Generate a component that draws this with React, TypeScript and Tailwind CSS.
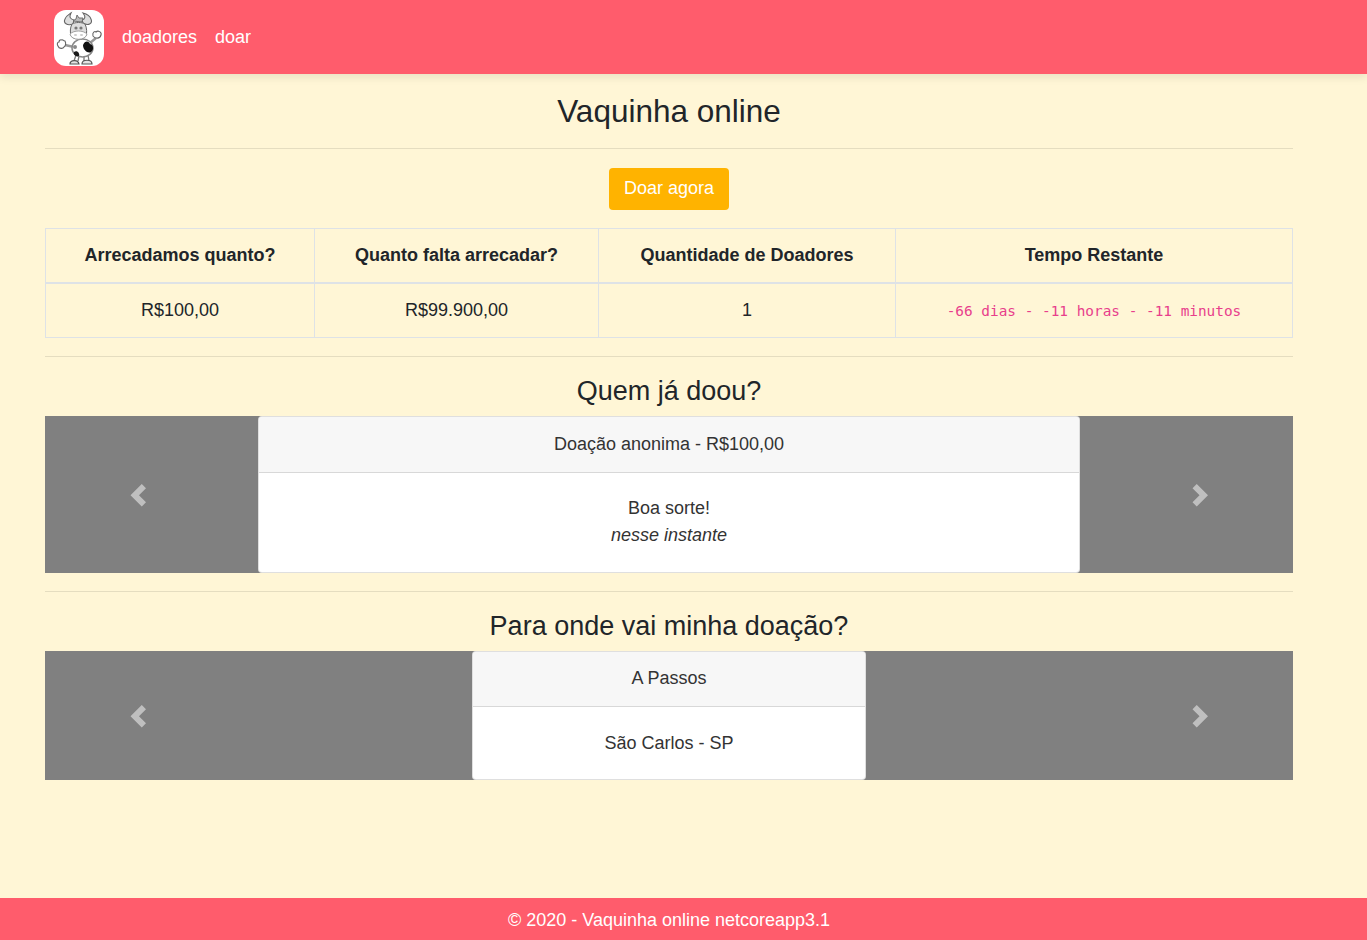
const CowLogo = () => (
  <svg viewBox="0 0 50 56" className="mt-[2px] h-14 w-[50px] rounded-xl bg-white">
    {/* horns */}
    <path d="M19 14 C13 16 9 13 11 9 C12 6 14 5 17 3 C15 7 16 9 20 10 Z" fill="#ddd" stroke="#666" strokeWidth="1.1" />
    <path d="M29 13 C34 16 39 14 37 9 C36 6 33 4 29 3 C32 7 31 9 28 10 Z" fill="#ddd" stroke="#666" strokeWidth="1.1" />
    {/* tuft */}
    <path d="M19 11 L22 9 L23 5 L25 8 L29 8 L28 12 Z" fill="#bbb" stroke="#666" strokeWidth="0.9" />
    {/* legs and feet */}
    <path d="M22 45 L20 51 M25 46 L24 51 M30 46 L30 51 M34 45 L35 51" stroke="#777" strokeWidth="1.3" fill="none" />
    <path d="M16 54 C16 50 24 49 25 54 Z" fill="#e4e4e4" stroke="#555" strokeWidth="1.2" />
    <path d="M28 54 C28 49 38 49 38 54 Z" fill="#e4e4e4" stroke="#555" strokeWidth="1.2" />
    {/* arms */}
    <path d="M36 33 L42 28 M20 37 L11 35" stroke="#999" strokeWidth="2.4" fill="none" />
    <path d="M39 26 C38 22 41 21 42 22 C44 20 48 22 47 25 C46 29 41 29 39 26 Z" fill="#fff" stroke="#666" strokeWidth="1.1" />
    <path d="M11 31 C9 31 9 29 8 30 C6 29 5 31 5 32 C3 32 3 35 4 36 C5 39 9 39 10 37 C12 36 12 33 11 31 Z" fill="#fff" stroke="#666" strokeWidth="1.1" />
    {/* body */}
    <ellipse cx="28.5" cy="38" rx="10.5" ry="9" fill="#fff" stroke="#888" strokeWidth="1.5" />
    <path d="M29 35 C31 30 35 31 36 34 C40 35 40 40 37 42 C34 44 29 40 29 35 Z" fill="#111" />
    <path d="M20 42 C23 40 26 43 25 46 C22 47 19 45 20 42 Z" fill="#1a1a1a" />
    <circle cx="21" cy="37" r="2" fill="#888" />
    {/* head */}
    <path d="M18 14 C21 12 28 12 31 14 C33 18 33 23 32 26 C29 30 20 30 17 26 C16 22 16 18 18 14 Z" fill="#ddd" stroke="#666" strokeWidth="1" />
    <path d="M16 24 C20 20 29 20 33 24 C32 31 17 31 16 24 Z" fill="#fff" stroke="#999" strokeWidth="0.9" />
    <circle cx="22" cy="18" r="1.6" fill="#777" />
    <circle cx="27" cy="18" r="1.6" fill="#777" />
    <ellipse cx="21.5" cy="25" rx="1.6" ry="1.1" fill="#ccc" />
    <ellipse cx="27.5" cy="25" rx="1.6" ry="1.1" fill="#ccc" />
  </svg>
);

const Arrow = ({ right }: { right?: boolean }) => (
  <svg viewBox="0 0 8 8" className={`mt-[2px] h-[22.5px] w-[22.5px] fill-white opacity-50 ${right ? "ml-[2px]" : ""}`}>
    <path d={right ? "M2.75 0l-1.5 1.5L3.75 4l-2.5 2.5L2.75 8l4-4-4-4z" : "M5.25 0l-4 4 4 4 1.5-1.5L4.25 4l2.5-2.5L5.25 0z"} />
  </svg>
);

const Carousel = ({ title, widthClass, children }: { title: string; widthClass: string; children: React.ReactNode }) => (
  <div className="relative flex justify-center bg-[#808080]">
    <div className={`rounded border border-black/[.125] bg-white text-center text-[#333] ${widthClass}`}>
      <div className="rounded-t border-b border-black/[.125] bg-[#f7f7f7] py-[13.75px] leading-[27px]">{title}</div>
      <div className="py-[22.5px] leading-[27px]">{children}</div>
    </div>
    <div className="absolute inset-y-0 left-0 flex w-[15%] items-center justify-center">
      <Arrow />
    </div>
    <div className="absolute inset-y-0 right-0 flex w-[15%] items-center justify-center">
      <Arrow right />
    </div>
  </div>
);

const headers = ["Arrecadamos quanto?", "Quanto falta arrecadar?", "Quantidade de Doadores", "Tempo Restante"];

export default function App() {
  return (
    <div className="flex min-h-[940px] flex-col bg-[#fff6d6] font-['Liberation_Sans',Arial,sans-serif] text-[18px] text-[#212529]">
      {/* Navbar */}
      <nav className="flex h-[74px] items-center gap-[18px] bg-[#ff5c6c] pl-[54px] text-white shadow-[0_4px_8px_rgba(0,0,0,0.08)]">
        <CowLogo />
        <a>doadores</a>
        <a>doar</a>
      </nav>

      {/* Content */}
      <main className="ml-[45px] w-[1248px] flex-1 text-center">
        <h1 className="pt-[18px] text-[31.5px] leading-[38px]">Vaquinha online</h1>
        <hr className="mt-[18px] border-black/10" />
        <button className="mx-auto mt-[19px] block h-[42px] w-[120px] rounded bg-[#ffb300] pb-[2px] text-white">Doar agora</button>

        <table className="mt-[18px] w-full table-fixed border-collapse">
          <thead>
            <tr className="h-[54px]">
              {headers.map((h, i) => (
                <th
                  key={h}
                  className={`border border-b-2 border-[#dee2e6] font-bold ${["w-[269px]", "w-[284px]", "w-[297px]", ""][i]}`}
                >
                  {h}
                </th>
              ))}
            </tr>
          </thead>
          <tbody>
            <tr className="h-[55px]">
              <td className="border border-[#dee2e6]">R$100,00</td>
              <td className="border border-[#dee2e6]">R$99.900,00</td>
              <td className="border border-[#dee2e6]">1</td>
              <td className="border border-[#dee2e6]">
                <code className="font-['DejaVu_Sans_Mono',monospace] text-[14.4px] text-[#e83e8c]">
                  -66 dias - -11 horas - -11 minutos
                </code>
              </td>
            </tr>
          </tbody>
        </table>

        <hr className="mt-[18px] border-black/10" />
        <h3 className="pt-[18px] pb-[9px] text-[27px] leading-[32px]">Quem já doou?</h3>
        <Carousel title="Doação anonima - R$100,00" widthClass="w-[822px]">
          <p>Boa sorte!</p>
          <p className="italic">nesse instante</p>
        </Carousel>

        <hr className="mt-[18px] border-black/10" />
        <h3 className="pt-[18px] pb-[9px] text-[27px] leading-[32px]">Para onde vai minha doação?</h3>
        <Carousel title="A Passos" widthClass="w-[394px]">
          <p>São Carlos - SP</p>
        </Carousel>
      </main>

      {/* Footer */}
      <footer className="h-[42px] bg-[#ff5c6c] text-white">
        <p className="w-[1338px] text-center leading-[44px]">© 2020 - Vaquinha online netcoreapp3.1</p>
      </footer>
    </div>
  );
}
